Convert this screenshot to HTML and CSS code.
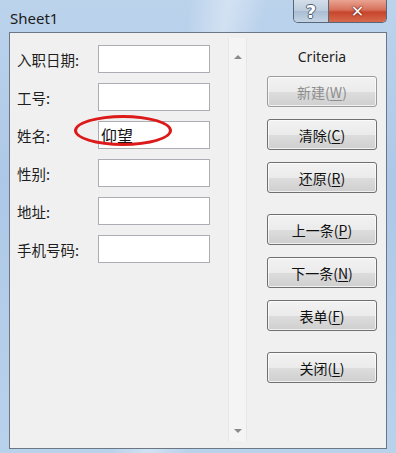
FILE: index.html
```html
<!DOCTYPE html>
<html lang="zh-CN">
<head>
  <meta charset="UTF-8">
  <title>Sheet1</title>
  <link rel="stylesheet" href="styles.css">
</head>
<body>
  <div class="window">
    <div class="titlebar">
      <span class="title">Sheet1</span>
      <div class="caption-buttons">
        <span class="cap help">?</span>
        <span class="cap close">✕</span>
      </div>
    </div>

    <div class="client">
      <div class="form">
        <div class="row"><label>入职日期:</label><input type="text"></div>
        <div class="row"><label>工号:</label><input type="text"></div>
        <div class="row"><label>姓名:</label><input type="text" value="仰望"></div>
        <div class="row"><label>性别:</label><input type="text"></div>
        <div class="row"><label>地址:</label><input type="text"></div>
        <div class="row"><label>手机号码:</label><input type="text"></div>
        <div class="mark"></div>
      </div>

      <div class="scrollbar">
        <span class="arrow up"></span>
        <span class="arrow down"></span>
      </div>

      <div class="actions">
        <div class="criteria">Criteria</div>
        <button class="btn" disabled>新建(<u>W</u>)</button>
        <button class="btn">清除(<u>C</u>)</button>
        <button class="btn">还原(<u>R</u>)</button>
        <button class="btn group">上一条(<u>P</u>)</button>
        <button class="btn">下一条(<u>N</u>)</button>
        <button class="btn">表单(<u>F</u>)</button>
        <button class="btn group">关闭(<u>L</u>)</button>
      </div>
    </div>
  </div>
</body>
</html>
```

FILE: styles.css
```css
:root {
  --face: #f0f0f0;
  --input-border: #abadb3;
  --btn-border: #707070;
  --text: #1e1e1e;
}

body {
  margin: 0;
  font-family: "Noto Sans", "Noto Sans CJK SC", sans-serif;
  color: var(--text);
}

.window {
  width: 396px;
  height: 453px;
  display: flex;
  flex-direction: column;
  background:
    linear-gradient(100deg, transparent 40%, rgba(255, 255, 255, 0.35) 48%, transparent 56%),
    linear-gradient(to bottom, #bcd3ec, #adc8e7 40%, #b9d2ec);
}

.titlebar {
  height: 32px;
  display: flex;
  align-items: flex-start;
  flex-shrink: 0;
}

.title {
  margin: 7px 0 0 10px;
  font-size: 15px;
  line-height: 22px;
  color: #1b1b1b;
}

.caption-buttons {
  margin-left: auto;
  margin-right: 9px;
  display: flex;
  height: 22px;
  border: 1px solid #566779;
  border-top: none;
  border-radius: 0 0 5px 5px;
  overflow: hidden;
}

.cap {
  display: flex;
  align-items: center;
  justify-content: center;
  font-family: "DejaVu Sans", sans-serif;
  font-weight: bold;
  color: #fff;
}

.help {
  width: 34px;
  font-size: 18px;
  color: #ffffff;
  text-shadow: 1px 0 0 #4d5f75, -1px 0 0 #4d5f75, 0 1px 0 #4d5f75, 0 -1px 0 #4d5f75;
  background: linear-gradient(to bottom, #d3dee9, #bccbdc 50%, #a9bcd1 51%, #c4d4e5);
  border-right: 1px solid #566779;
}

.close {
  width: 57px;
  font-size: 16px;
  text-shadow: 0 0 2px #5e140b, 0 0 1px #5e140b;
  background: linear-gradient(to bottom, #e9a491, #d8705b 45%, #c8452d 55%, #d66a4c);
}

.client {
  flex: 1;
  margin: 0 9px 4px 9px;
  border: 1px solid #6b7785;
  background: var(--face);
  display: flex;
  padding: 5px 0 7px 0;
}

.form {
  position: relative;
  width: 193px;
  margin-left: 7px;
  padding-top: 7px;
  display: flex;
  flex-direction: column;
  gap: 10px;
}

.row {
  display: flex;
  align-items: center;
  height: 28px;
}

.row label {
  width: 81px;
  font-size: 14.5px;
  font-family: "Noto Sans CJK SC", sans-serif;
}

.row input {
  box-sizing: border-box;
  width: 112px;
  height: 28px;
  margin: 0;
  padding: 0 0 0 2px;
  border: 1px solid var(--input-border);
  background: #fff;
  font-family: "Noto Sans CJK SC", sans-serif;
  font-size: 16px;
  color: #111;
  outline: none;
}

.mark {
  position: absolute;
  left: 57px;
  top: 77px;
  width: 92px;
  height: 25px;
  border: 3px solid #dc1a1a;
  border-radius: 50%;
}

.scrollbar {
  width: 19px;
  margin-left: 18px;
  box-sizing: border-box;
  border-left: 1px solid #e6e6e6;
  border-right: 1px solid #e6e6e6;
  background: #f4f4f4;
  display: flex;
  flex-direction: column;
  justify-content: space-between;
  align-items: center;
  padding: 17px 0 8px;
}

.arrow {
  width: 0;
  height: 0;
  border-left: 4px solid transparent;
  border-right: 4px solid transparent;
}

.arrow.up {
  border-bottom: 4px solid #8a8a8a;
}

.arrow.down {
  border-top: 4px solid #8a8a8a;
}

.actions {
  width: 110px;
  margin-left: 20px;
  display: flex;
  flex-direction: column;
  gap: 12px;
}

.criteria {
  margin-top: 9px;
  margin-bottom: -3px;
  height: 20px;
  line-height: 20px;
  text-align: center;
  font-size: 14px;
  color: #222;
}

.btn {
  height: 31px;
  border: 1px solid var(--btn-border);
  border-radius: 3px;
  background: linear-gradient(to bottom, #f2f2f2, #ebebeb 50%, #dddddd 51%, #cfcfcf);
  box-shadow: inset 0 0 0 1px rgba(255, 255, 255, 0.7);
  font-family: "Noto Sans CJK SC", sans-serif;
  font-size: 14px;
  color: #111;
  padding: 0;
}

.btn u {
  text-underline-offset: 2px;
}

.btn:disabled {
  color: #8d8d8d;
  border-color: #9c9c9c;
}

.btn.group {
  margin-top: 9px;
}
```
